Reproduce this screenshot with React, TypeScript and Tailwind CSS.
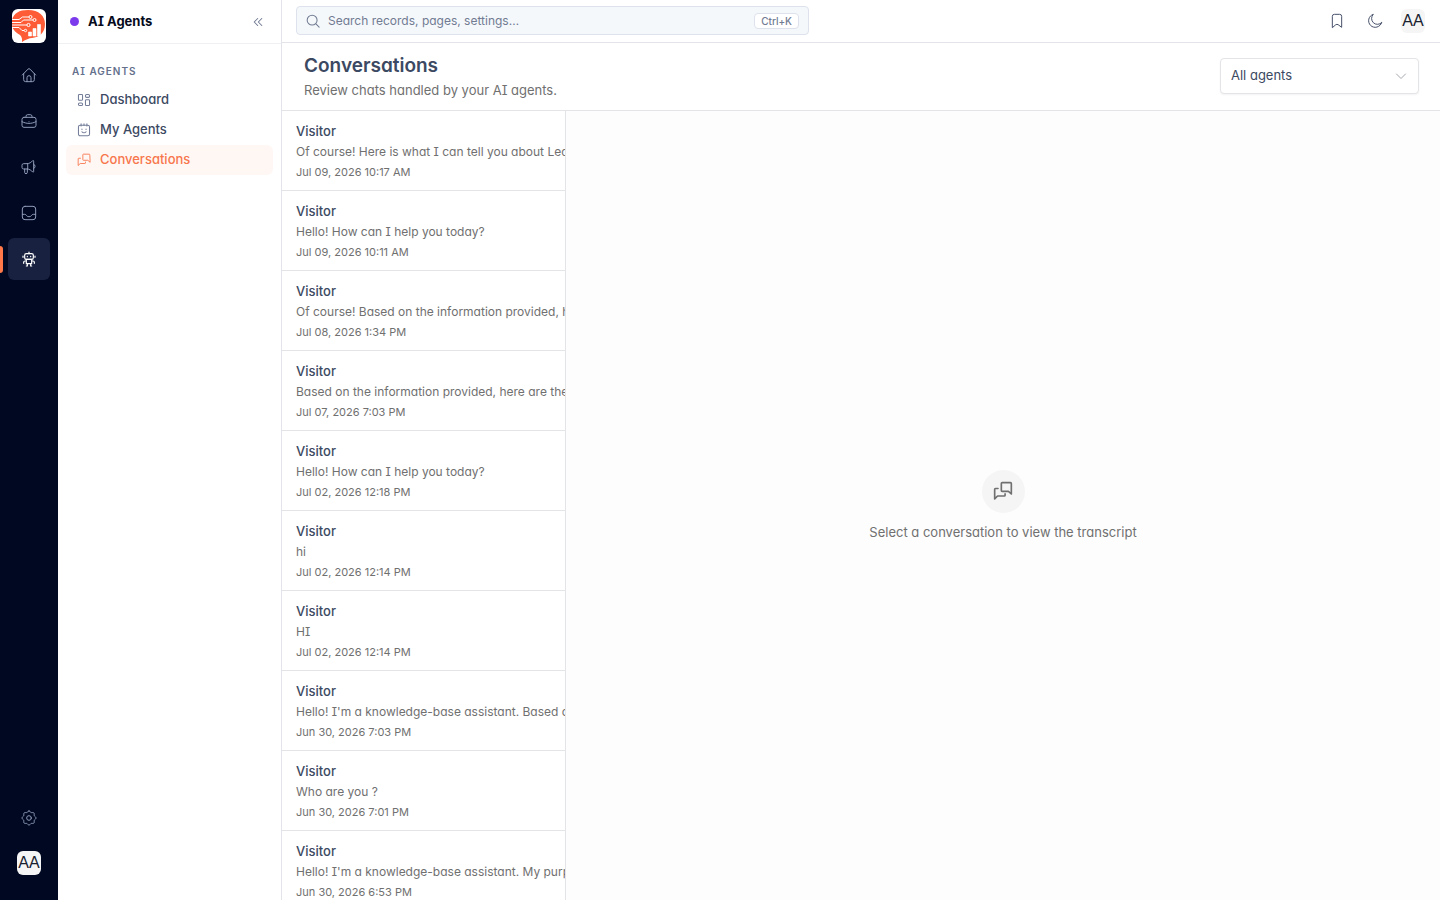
import React from "react";
import type { ReactNode } from "react";

const conversations = [
  { text: "Of course! Here is what I can tell you about Lead Management", date: "Jul 09, 2026 10:17 AM" },
  { text: "Hello! How can I help you today?", date: "Jul 09, 2026 10:11 AM" },
  { text: "Of course! Based on the information provided, here is a summary", date: "Jul 08, 2026 1:34 PM" },
  { text: "Based on the information provided, here are the main features", date: "Jul 07, 2026 7:03 PM" },
  { text: "Hello! How can I help you today?", date: "Jul 02, 2026 12:18 PM" },
  { text: "hi", date: "Jul 02, 2026 12:14 PM" },
  { text: "HI", date: "Jul 02, 2026 12:14 PM" },
  { text: "Hello! I'm a knowledge-base assistant. Based on the documents", date: "Jun 30, 2026 7:03 PM" },
  { text: "Who are you ?", date: "Jun 30, 2026 7:01 PM" },
  { text: "Hello! I'm a knowledge-base assistant. My purpose is to help", date: "Jun 30, 2026 6:53 PM" },
];

type IconProps = { className?: string; width?: number; children?: ReactNode };

const Icon = ({ className = "size-4", width = 1.5, children }: IconProps) => (
  <svg
    viewBox="0 0 24 24"
    fill="none"
    stroke="currentColor"
    strokeWidth={width}
    strokeLinecap="round"
    strokeLinejoin="round"
    className={className}
    aria-hidden="true"
  >
    {children}
  </svg>
);

const HomeIcon = () => (
  <Icon>
    <path d="M2 12 10.6 3.100a2 2 0 0 1 2.800 0L22 12" />
    <path d="M4 10V19a3 3 0 0 0 3 3h10a3 3 0 0 0 3-3V10" />
    <path d="M9 22v-6a3 3 0 0 1 6 0v6" />
  </Icon>
);

const BriefcaseIcon = () => (
  <Icon>
    <rect x="1.5" y="6.5" width="21" height="15" rx="3" />
    <path d="M7.5 6.5V5a2.5 2.5 0 0 1 2.5-2.500h4A2.500 2.500 0 0 1 16.500 5v1.500" />
    <path d="M1.500 13c6.500 3.500 14.500 3.500 21 0M12 13h.01" />
  </Icon>
);

const MegaphoneIcon = () => (
  <Icon>
    <path d="M9.500 7H4a2.500 2.500 0 0 0-2.500 2.500v3A2.500 2.500 0 0 0 4 15h5.500z" />
    <path d="M9.500 7c3 0 6-2 8-4.500.6-.7 1.500-.3 1.500.7v15.600c0 1-.9 1.400-1.500.7-2-2.500-5-4.500-8-4.500" />
    <path d="M5.500 15v5a2 2 0 0 0 4 0v-5M19 7.500a4 4 0 0 1 0 7" />
  </Icon>
);

const InboxIcon = () => (
  <Icon>
    <rect x="2" y="2" width="20" height="20" rx="4" />
    <path d="M2 14h3.500c1.500 0 2 .7 2.600 1.600.8 1.200 1.700 1.900 3.900 1.900s3.100-.7 3.900-1.900c.6-.9 1.100-1.600 2.600-1.600H22" />
  </Icon>
);

const RobotIcon = () => (
  <Icon width={1.8}>
    <path d="M12 4V1.500" />
    <rect x="5.500" y="4" width="13" height="8.500" rx="2.500" />
    <path d="M9.500 8v.5M14.500 8v.5M3 7.500v2M21 7.500v2" />
    <path d="M8 12.500h8V19H8zM8 15H6a2 2 0 0 0-2 2v1.500M16 15h2a2 2 0 0 1 2 2v1.500" />
    <path d="M9.500 19v3.500H8M14.500 19v3.500H16" />
  </Icon>
);

const SettingsIcon = () => (
  <Icon>
    <path d="M12 1.500c1.500 0 2 1.800 3.300 2.300 1.300.5 2.900-.5 4 .6s.1 2.700.6 4 2.600 2.100 2.600 3.600-2.100 2.300-2.600 3.600.5 2.900-.6 4-2.700.1-4 .6-1.800 2.300-3.300 2.300-2-1.800-3.300-2.300-2.900.5-4-.6-.1-2.700-.6-4S1.500 13.500 1.500 12s2.100-2.300 2.600-3.600-.5-2.900.6-4 2.700-.1 4-.6S10.500 1.500 12 1.500z" />
    <circle cx="12" cy="12" r="3.500" />
  </Icon>
);

const DashboardIcon = () => (
  <Icon className="size-3.5" width={1.8}>
    <rect x="2.500" y="2.500" width="7" height="10" rx="1.500" />
    <rect x="14.500" y="2.500" width="7" height="5" rx="2" />
    <rect x="2.500" y="17" width="7" height="4.500" rx="2" />
    <rect x="14.500" y="11.500" width="7" height="10" rx="1.500" />
  </Icon>
);

const AgentIcon = () => (
  <Icon className="size-3.5" width={1.8}>
    <rect x="2.500" y="4" width="19" height="18" rx="3" />
    <path d="M7 1.500V5M12 1.500V4M17 1.500V5M8.500 10.500v.5M15.500 10.500v.5M8.500 15c1.800 2.500 5.200 2.500 7 0" />
  </Icon>
);

const ChatsIcon = ({ className, width }: IconProps) => (
  <Icon className={className} width={width}>
    <path d="M22 15.500 18.500 12.500H11a1 1 0 0 1-1-1V3a1 1 0 0 1 1-1h10a1 1 0 0 1 1 1z" />
    <path d="M14.500 15.500V17a1 1 0 0 1-1 1H5.500L2 21.500V10a1 1 0 0 1 1-1h3" />
  </Icon>
);

const Logo = () => (
  <svg viewBox="0 0 34 34" className="size-[34px] rounded-md bg-white" aria-hidden="true">
    <path
      d="M0 11C2 4 7 1 16 1c11 0 17 6 17 14 0 9-6 13.500-13 14-3 .2-6 1.500-10 4 .3-3 0-5-2-7-4-2-7-5-8-9z"
      fill="#fd5c36"
    />
    <g fill="none" stroke="#fff" strokeWidth="1">
      <path d="M0 10.500h7l3.500-2.500h6.500M0 13.500h9l2.500-2.500h9.500M0 16h15M0 18.500h7l3 3h2" />
      <circle cx="18.500" cy="8" r="1.500" />
      <circle cx="22.500" cy="11" r="1.500" />
      <circle cx="16.500" cy="16" r="1.600" />
      <circle cx="13.500" cy="21.500" r="1.200" />
    </g>
    <path
      d="M16.500 23h3v4h-3zM21 19.500h3V27h-3zM25.500 15.500h3V27h-3z"
      fill="#fff"
      stroke="#fff"
      strokeWidth=".6"
      strokeLinejoin="round"
    />
  </svg>
);

const railItems = [
  { label: "Home", icon: <HomeIcon /> },
  { label: "Work", icon: <BriefcaseIcon /> },
  { label: "Marketing", icon: <MegaphoneIcon /> },
  { label: "Inbox", icon: <InboxIcon /> },
];

const Avatar = () => (
  <button className="flex size-6 items-center justify-center rounded-md bg-[#f5f5f5] font-['Liberation_Sans',sans-serif] text-base text-[#18212f]">
    AA
  </button>
);

const Rail = () => (
  <nav className="flex w-[58px] shrink-0 flex-col items-center bg-[#000822] pt-[9px] pb-[25px] text-[#8f9bb8]">
    <a href="#" aria-label="Start">
      <Logo />
    </a>
    <div className="mt-[11px] flex flex-col gap-1">
      {railItems.map((item) => (
        <a key={item.label} href="#" aria-label={item.label} className="flex size-[42px] items-center justify-center">
          {item.icon}
        </a>
      ))}
      <a
        href="#"
        aria-label="AI Agents"
        className="relative flex size-[42px] items-center justify-center rounded-md bg-[#18213f] text-white"
      >
        <span className="absolute top-2 -left-2 h-[27px] w-[3px] rounded-r-sm bg-[#ff7849]" />
        <RobotIcon />
      </a>
    </div>
    <a href="#" aria-label="Settings" className="mt-auto mb-3 flex size-[42px] items-center justify-center">
      <SettingsIcon />
    </a>
    <Avatar />
  </nav>
);

const navItems = [
  { label: "Dashboard", icon: <DashboardIcon /> },
  { label: "My Agents", icon: <AgentIcon /> },
];

const Sidebar = () => (
  <aside className="w-56 shrink-0 border-r border-[#e2e4ea] bg-white">
    <div className="flex h-11 items-center border-b border-[#eef0f4] px-3">
      <span className="size-[9px] rounded-full bg-[#7c3aed]" />
      <h2 className="ml-[9px] text-[13px] font-bold text-[#050a1c]">AI Agents</h2>
      <button aria-label="Collapse" className="mr-1 ml-auto text-[#6f7891]">
        <Icon className="size-3.5" width={1.8}>
          <path d="m11.500 6-6 6 6 6M18.500 6l-6 6 6 6" />
        </Icon>
      </button>
    </div>
    <nav className="px-2 pt-[17px] text-[13px] font-medium text-[#3c4962]">
      <h3 className="mb-1 px-1.5 text-[10px] leading-5 font-semibold tracking-widest text-[#64708c]">AI AGENTS</h3>
      {navItems.map((item) => (
        <a key={item.label} href="#" className="flex h-[30px] items-center gap-[9px] px-[11px]">
          <span className="text-[#737d98]">{item.icon}</span>
          {item.label}
        </a>
      ))}
      <a href="#" className="flex h-[30px] items-center gap-[9px] rounded-md bg-[#fff7f4] px-[11px] text-[#f7764c]">
        <ChatsIcon className="size-3.5" />
        Conversations
      </a>
    </nav>
  </aside>
);

const TopBar = () => (
  <header className="flex h-[43px] shrink-0 items-center border-b border-[#e2e4ea] bg-white pr-[15px] pb-px pl-3.5">
    <div className="flex h-[29px] max-w-[513px] flex-1 items-center rounded-sm border border-[#dde2ec] bg-[#f5f8fb] pr-[9px] pl-[9px] text-[#717b92]">
      <Icon className="size-3.5" width={1.8}>
        <circle cx="10.500" cy="10.500" r="8.500" />
        <path d="m17 17 5.500 5.500" />
      </Icon>
      <input
        type="text"
        aria-label="Search"
        placeholder="Search records, pages, settings…"
        className="ml-2 h-5 min-w-0 flex-1 bg-transparent text-xs outline-none placeholder:text-[#717b92]"
      />
      <kbd className="rounded-sm border border-[#dde2ec] bg-white px-1.5 font-[Inter,sans-serif] text-[10px] leading-[14px] font-medium">
        Ctrl+K
      </kbd>
    </div>
    <div className="ml-auto flex items-center text-[#465169]">
      <button aria-label="Bookmarks">
        <Icon className="size-4">
          <path d="M5 21.500V5a3 3 0 0 1 3-3h8a3 3 0 0 1 3 3v16.500l-5.300-4a3 3 0 0 0-3.400 0z" />
        </Icon>
      </button>
      <button aria-label="Dark mode" className="ml-[22px]">
        <Icon className="size-4">
          <path d="M22 14.500A10 10 0 1 1 9.500 2a8.500 8.500 0 0 0 12.500 12.500z" />
        </Icon>
      </button>
      <div className="ml-[18px]">
        <Avatar />
      </div>
    </div>
  </header>
);

const PageHeader = () => (
  <div className="flex h-[68px] shrink-0 items-center justify-between border-b border-[#e2e4e7] bg-white pr-[21px] pb-px pl-[22px]">
    <div>
      <h1 className="text-[19px] leading-7 font-semibold text-[#3c4962]">Conversations</h1>
      <p className="text-[13px] leading-5 text-[#707070]">Review chats handled by your AI agents.</p>
    </div>
    <div className="relative">
      <select
        aria-label="Agent"
        className="block h-9 w-[199px] appearance-none rounded-sm border border-[#e2e4e7] bg-white px-2.5 text-[13px] text-[#3c4962] shadow-xs"
      >
        <option>All agents</option>
      </select>
      <Icon className="pointer-events-none absolute top-3 right-3 size-3 text-[#a5a8ae]" width={2}>
        <path d="m3 8 9 9 9-9" />
      </Icon>
    </div>
  </div>
);

const ConversationList = () => (
  <ul className="w-[284px] shrink-0 overflow-hidden border-r border-[#e2e4e7] bg-white">
    {conversations.map((item, i) => (
      <li key={i} className="h-20 border-b border-[#e2e4e7]">
        <button className="block w-full overflow-hidden pt-2.5 pl-3.5 text-left whitespace-nowrap text-[#707070]">
          <span className="block text-[13px] leading-5 font-medium text-[#3c4962]">Visitor</span>
          <span className="block text-xs leading-[21px]">{item.text}</span>
          <span className="block text-[11px] leading-5">{item.date}</span>
        </button>
      </li>
    ))}
  </ul>
);

const EmptyState = () => (
  <section className="flex flex-1 flex-col items-center justify-center bg-[#fdfdfd] text-[#707070]">
    <div className="flex size-[43px] items-center justify-center rounded-full bg-[#f5f5f5]">
      <ChatsIcon className="size-5" width={2} />
    </div>
    <p className="mt-[9px] text-[13px] leading-5">Select a conversation to view the transcript</p>
  </section>
);

const App = () => {
  return (
    <div className="flex h-screen overflow-hidden bg-white font-[Inter,'Noto_Sans',sans-serif] [font-feature-settings:'cv08','cv11']">
      <Rail />
      <Sidebar />
      <main className="flex min-w-0 flex-1 flex-col">
        <TopBar />
        <PageHeader />
        <div className="flex min-h-0 flex-1">
          <ConversationList />
          <EmptyState />
        </div>
      </main>
    </div>
  );
};

export default App;
